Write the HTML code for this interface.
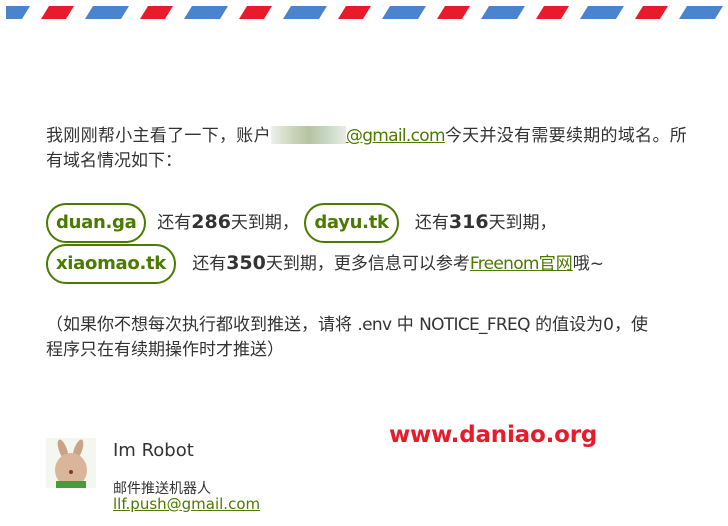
<!DOCTYPE html>
<html><head><meta charset="utf-8"><style>
body{margin:0;width:728px;height:526px;background:#fff;position:relative;overflow:hidden;font-family:"DejaVu Sans","Noto Sans CJK SC",sans-serif;color:#333;}
.t{position:absolute;left:46px;font-size:17px;line-height:25px;white-space:nowrap;}
.l{letter-spacing:-0.7px}
a{color:#4a7a00;text-decoration:underline;}
.b{display:inline-block;border:2px solid #4a7a00;border-radius:20px;color:#4a7a00;font-weight:bold;font-size:18px;padding:0 8px;height:36px;line-height:36px;box-sizing:content-box;letter-spacing:-0.3px}
.n{font-weight:bold;font-size:19px;}
</style></head><body>
<svg style="position:absolute;left:0;top:0" width="728" height="20">
<defs><pattern id="p" x="-14" y="0" width="99" height="20" patternUnits="userSpaceOnUse">
<polygon points="8,6 44,6 36,19 0,19" fill="#4a83ce"/>
<polygon points="63,6 88,6 80,19 55,19" fill="#e81b2b"/>
</pattern></defs>
<rect x="6" y="0" width="722" height="20" fill="url(#p)"/>
</svg>
<div class="t" style="top:124px;letter-spacing:0.3px">我刚刚帮小主看了一下，账户<span style="display:inline-block;width:75px;height:18px;vertical-align:-3px;background:linear-gradient(90deg,#eef0ec,#cfd8c0,#b5c4a0,#c8d8c6,#e8ece0)"></span><a class="l">@gmail.com</a>今天并没有需要续期的域名。所</div>
<div class="t" style="top:149px">有域名情况如下：</div>
<div class="t" style="top:203px;line-height:38px"><span class="b">duan.ga</span>&nbsp;&nbsp;还有<span class="n">286</span>天到期，&nbsp;<span class="b">dayu.tk</span>&nbsp;&nbsp;&nbsp;还有<span class="n">316</span>天到期，</div>
<div class="t" style="top:244px;line-height:38px"><span class="b">xiaomao.tk</span>&nbsp;&nbsp;&nbsp;还有<span class="n">350</span>天到期，更多信息可以参考<a class="l">Freenom</a><a>官网</a>哦~</div>
<div class="t" style="top:313px">（如果你不想每次执行都收到推送，请将 <span class="l">.env</span> 中 <span class="l">NOTICE_FREQ</span> 的值设为0，使</div>
<div class="t" style="top:338px">程序只在有续期操作时才推送）</div>
<svg style="position:absolute;left:46px;top:438px" width="50" height="50">
<rect width="50" height="50" fill="#f4f6f0"/>
<ellipse cx="17" cy="12" rx="4" ry="11" fill="#c9a487" transform="rotate(-20 17 12)"/>
<ellipse cx="32" cy="12" rx="4" ry="11" fill="#c9a487" transform="rotate(20 32 12)"/>
<ellipse cx="25" cy="32" rx="16" ry="17" fill="#d9b59a"/>
<rect x="10" y="43" width="30" height="7" fill="#4a9a3a"/>
<circle cx="25" cy="34" r="2" fill="#833"/>
</svg>
<div style="position:absolute;left:113px;top:440px;font-size:18px;color:#333">Im Robot</div>
<div style="position:absolute;left:113px;top:478px;font-size:14px;color:#333">邮件推送机器人</div>
<div style="position:absolute;left:113px;top:495px;font-size:15px"><a>llf.push@gmail.com</a></div>
<div style="position:absolute;left:389px;top:422px;font-size:23px;font-weight:bold;color:#e81b2b;font-family:'DejaVu Sans',sans-serif;letter-spacing:-0.2px">www.daniao.org</div>
</body></html>
